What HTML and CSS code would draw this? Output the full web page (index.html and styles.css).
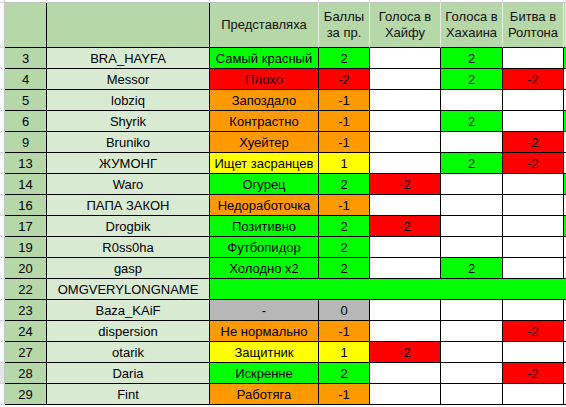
FILE: index.html
```html
<!DOCTYPE html>
<html lang="ru">
<head>
<meta charset="utf-8">
<title>Таблица</title>
<link rel="stylesheet" href="styles.css">
</head>
<body>
<div class="sheet">
  <div class="row top">
    <div class="gut"></div><div class="t"></div><div class="t"></div><div class="t"></div><div class="t"></div><div class="t"></div><div class="t"></div><div class="t"></div><div class="t last"></div>
  </div>
  <div class="row head">
    <div class="gut"></div>
    <div class="h dark"></div>
    <div class="h dark"></div>
    <div class="h">Представляха</div>
    <div class="h">Баллы<br>за пр.</div>
    <div class="h">Голоса в<br>Хайфу</div>
    <div class="h">Голоса в<br>Хахаина</div>
    <div class="h">Битва в<br>Ролтона</div>
    <div class="h last"></div>
  </div>

  <div class="row"><div class="gut"></div><div class="n">3</div><div class="nm">BRA_HAYFA</div><div class="g">Самый красный</div><div class="g">2</div><div class="w"></div><div class="g">2</div><div class="w"></div><div class="g last"></div></div>
  <div class="row"><div class="gut"></div><div class="n">4</div><div class="nm">Messor</div><div class="r">Плохо</div><div class="r">-2</div><div class="w"></div><div class="g">2</div><div class="r">-2</div><div class="w last"></div></div>
  <div class="row"><div class="gut"></div><div class="n">5</div><div class="nm">lobziq</div><div class="o">Запоздало</div><div class="o">-1</div><div class="w"></div><div class="w"></div><div class="w"></div><div class="w last"></div></div>
  <div class="row"><div class="gut"></div><div class="n">6</div><div class="nm">Shyrik</div><div class="o">Контрастно</div><div class="o">-1</div><div class="w"></div><div class="g">2</div><div class="w"></div><div class="g last"></div></div>
  <div class="row"><div class="gut"></div><div class="n">9</div><div class="nm">Bruniko</div><div class="o">Хуейтер</div><div class="o">-1</div><div class="w"></div><div class="w"></div><div class="r">-2</div><div class="w last"></div></div>
  <div class="row"><div class="gut"></div><div class="n">13</div><div class="nm">ЖУМОНГ</div><div class="y">Ищет засранцев</div><div class="y">1</div><div class="w"></div><div class="g">2</div><div class="r">-2</div><div class="w last"></div></div>
  <div class="row"><div class="gut"></div><div class="n">14</div><div class="nm">Waro</div><div class="g">Огурец</div><div class="g">2</div><div class="r">-2</div><div class="w"></div><div class="w"></div><div class="g last"></div></div>
  <div class="row"><div class="gut"></div><div class="n">16</div><div class="nm">ПАПА ЗАКОН</div><div class="o">Недоработочка</div><div class="o">-1</div><div class="w"></div><div class="w"></div><div class="w"></div><div class="w last"></div></div>
  <div class="row"><div class="gut"></div><div class="n">17</div><div class="nm">Drogbik</div><div class="g">Позитивно</div><div class="g">2</div><div class="r">-2</div><div class="w"></div><div class="w"></div><div class="g last"></div></div>
  <div class="row"><div class="gut"></div><div class="n">19</div><div class="nm">R0ss0ha</div><div class="g">Футбопидор</div><div class="g">2</div><div class="w"></div><div class="w"></div><div class="w"></div><div class="w last"></div></div>
  <div class="row"><div class="gut"></div><div class="n">20</div><div class="nm">gasp</div><div class="g">Холодно х2</div><div class="g">2</div><div class="w"></div><div class="g">2</div><div class="w"></div><div class="w last"></div></div>
  <div class="row"><div class="gut"></div><div class="n">22</div><div class="nm">OMGVERYLONGNAME</div><div class="g merged last"></div></div>
  <div class="row"><div class="gut"></div><div class="n">23</div><div class="nm">Baza_KAiF</div><div class="gr">-</div><div class="gr">0</div><div class="w"></div><div class="w"></div><div class="w"></div><div class="w last"></div></div>
  <div class="row"><div class="gut"></div><div class="n">24</div><div class="nm">dispersion</div><div class="o">Не нормально</div><div class="o">-1</div><div class="w"></div><div class="w"></div><div class="r">-2</div><div class="w last"></div></div>
  <div class="row"><div class="gut"></div><div class="n">27</div><div class="nm">otarik</div><div class="y">Защитник</div><div class="y">1</div><div class="r">-2</div><div class="w"></div><div class="w"></div><div class="w last"></div></div>
  <div class="row sel"><div class="gut"></div><div class="n">28</div><div class="nm">Daria</div><div class="g">Искренне</div><div class="g">2</div><div class="w"></div><div class="w"></div><div class="r">-2</div><div class="w last"></div></div>
  <div class="row"><div class="gut"></div><div class="n">29</div><div class="nm">Fint</div><div class="o">Работяга</div><div class="o">-1</div><div class="w"></div><div class="w"></div><div class="w"></div><div class="w last"></div></div>
</div>
</body>
</html>
```

FILE: styles.css
```css
html, body {
  margin: 0;
  padding: 0;
  background: #ffffff;
  overflow: hidden;
}

.sheet {
  display: grid;
  grid-template-columns: 5px 42px 163px 109px 51px 71px 62px 61px 1fr;
  grid-template-rows: 3px 45px;
  grid-auto-rows: 21px;
  width: 566px;
  font-family: "Liberation Sans", Arial, sans-serif;
  font-size: 13px;
  color: #000;
}

.row {
  display: contents;
}

.sheet .row > div {
  box-sizing: border-box;
  border-right: 1px solid #000;
  border-bottom: 1px solid #000;
  display: flex;
  align-items: center;
  justify-content: center;
  text-align: center;
  white-space: nowrap;
  overflow: hidden;
}

.sheet .row > .last {
  border-right: none;
}

.sheet .row > .gut {
  background: #f8f9fa;
  border-right: 1px solid #c4c7c5;
  border-bottom: 1px solid #d4d6d8;
}

.sheet .row.sel > .gut {
  background: #e3e5e8;
}

.sheet .top > .t {
  background: #ffffff;
  border-right: 1px solid #e2e3e3;
  border-bottom: 1px solid #c0c0c0;
}

.sheet .head > .h {
  background: #b6d7a8;
  border-right: 1px solid #e4eee0;
  line-height: 16px;
  color: #111;
}

.sheet .head > .h.dark {
  border-right: 1px solid #000;
}

.n {
  background: #b6d7a8;
}

.nm {
  background: #d9ead3;
}

.g { background: #00ff00; }
.r { background: #ff0000; }
.o { background: #ff9900; }
.y { background: #ffff00; }
.gr { background: #b7b7b7; }
.w { background: #ffffff; }

.merged {
  grid-column: span 6;
}
```
